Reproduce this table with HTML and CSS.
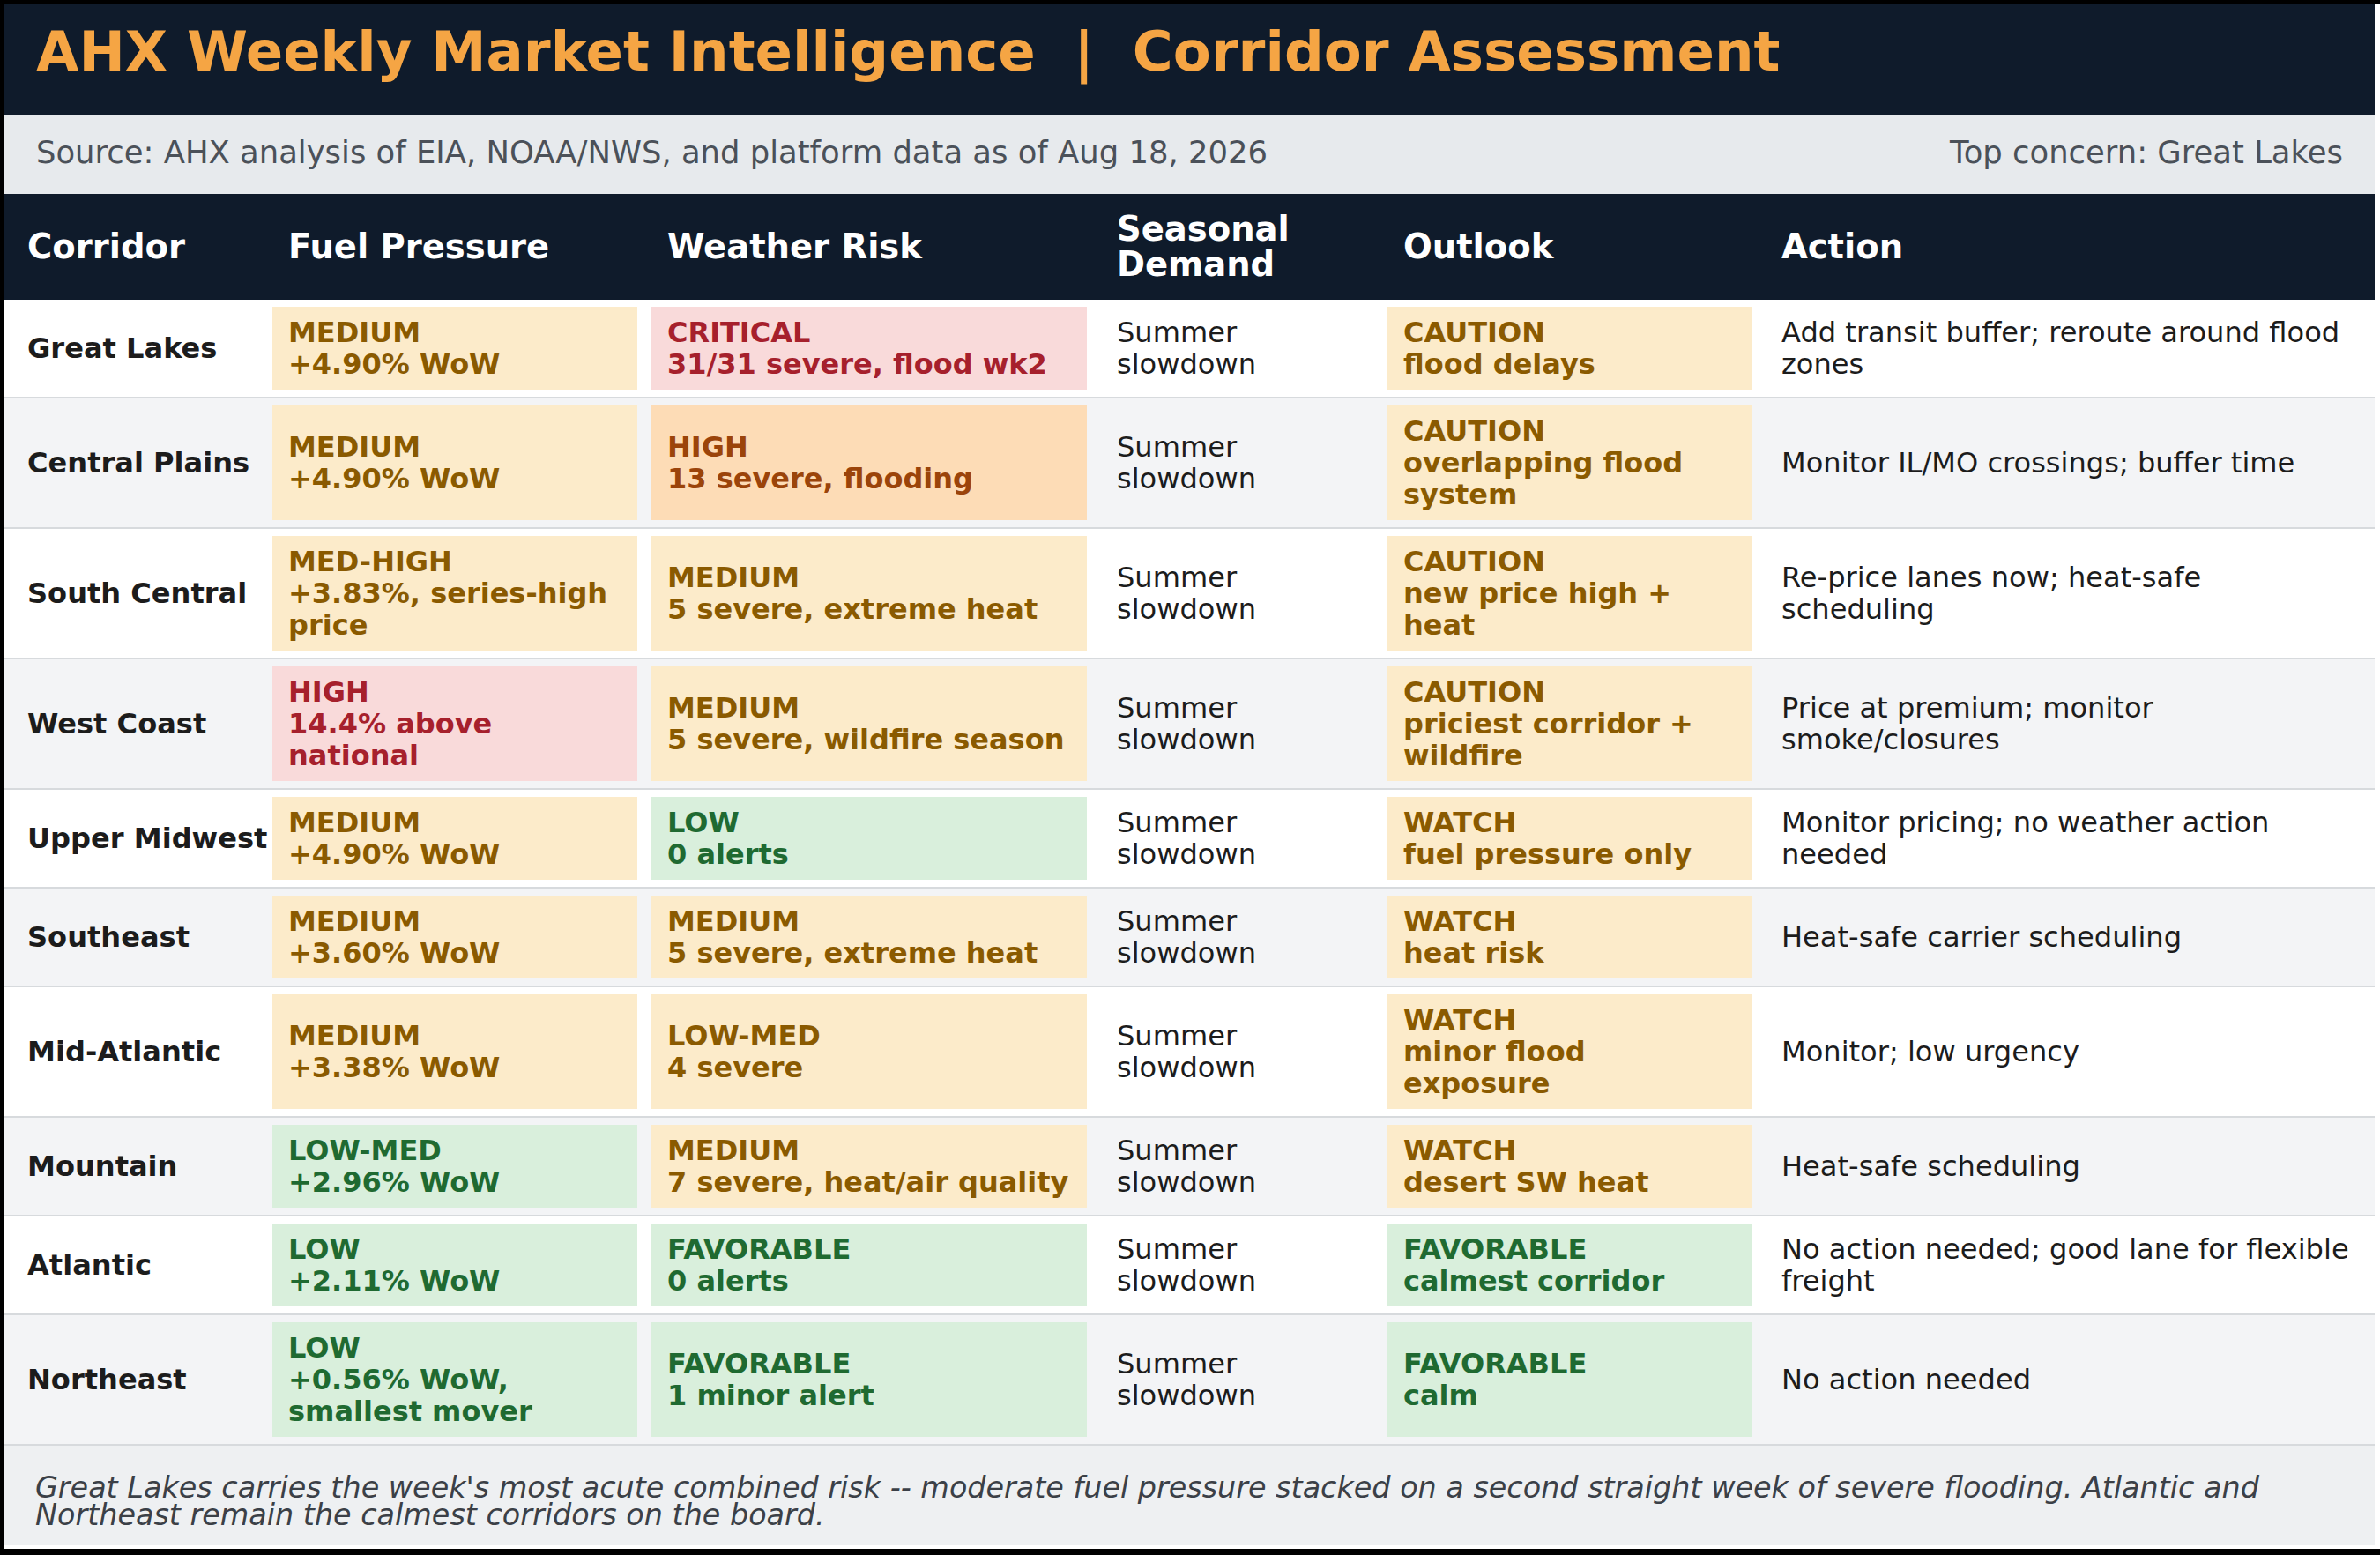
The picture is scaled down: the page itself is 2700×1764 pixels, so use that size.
FILE: index.html
```html
<!DOCTYPE html>
<html lang="en">
<head>
<meta charset="utf-8">
<title>AHX Weekly Market Intelligence | Corridor Assessment</title>
<link rel="stylesheet" href="styles.css">
</head>
<body>
<div class="frame">
  <header class="title-bar">
    <h1 class="title">AHX Weekly Market Intelligence  |  Corridor Assessment</h1>
  </header>
  <div class="meta">
    <span>Source: AHX analysis of EIA, NOAA/NWS, and platform data as of Aug 18, 2026</span>
    <span>Top concern: Great Lakes</span>
  </div>

  <div class="table">
    <div class="row head">
      <div class="cell"><div class="th">Corridor</div></div>
      <div class="cell"><div class="th">Fuel Pressure</div></div>
      <div class="cell"><div class="th">Weather Risk</div></div>
      <div class="cell"><div class="th">Seasonal Demand</div></div>
      <div class="cell"><div class="th">Outlook</div></div>
      <div class="cell"><div class="th">Action</div></div>
    </div>

    <div class="row">
      <div class="cell"><div class="name">Great Lakes</div></div>
      <div class="cell"><div class="badge amber"><span>MEDIUM</span><span>+4.90% WoW</span></div></div>
      <div class="cell"><div class="badge red"><span>CRITICAL</span><span>31/31 severe, flood wk2</span></div></div>
      <div class="cell"><div class="text">Summer slowdown</div></div>
      <div class="cell"><div class="badge amber"><span>CAUTION</span><span>flood delays</span></div></div>
      <div class="cell"><div class="text">Add transit buffer; reroute around flood zones</div></div>
    </div>

    <div class="row alt">
      <div class="cell"><div class="name">Central Plains</div></div>
      <div class="cell"><div class="badge amber"><span>MEDIUM</span><span>+4.90% WoW</span></div></div>
      <div class="cell"><div class="badge orange"><span>HIGH</span><span>13 severe, flooding</span></div></div>
      <div class="cell"><div class="text">Summer slowdown</div></div>
      <div class="cell"><div class="badge amber"><span>CAUTION</span><span>overlapping flood system</span></div></div>
      <div class="cell"><div class="text">Monitor IL/MO crossings; buffer time</div></div>
    </div>

    <div class="row">
      <div class="cell"><div class="name">South Central</div></div>
      <div class="cell"><div class="badge amber"><span>MED-HIGH</span><span>+3.83%, series-high price</span></div></div>
      <div class="cell"><div class="badge amber"><span>MEDIUM</span><span>5 severe, extreme heat</span></div></div>
      <div class="cell"><div class="text">Summer slowdown</div></div>
      <div class="cell"><div class="badge amber"><span>CAUTION</span><span>new price high + heat</span></div></div>
      <div class="cell"><div class="text">Re-price lanes now; heat-safe scheduling</div></div>
    </div>

    <div class="row alt">
      <div class="cell"><div class="name">West Coast</div></div>
      <div class="cell"><div class="badge red"><span>HIGH</span><span>14.4% above national</span></div></div>
      <div class="cell"><div class="badge amber"><span>MEDIUM</span><span>5 severe, wildfire season</span></div></div>
      <div class="cell"><div class="text">Summer slowdown</div></div>
      <div class="cell"><div class="badge amber"><span>CAUTION</span><span>priciest corridor + wildfire</span></div></div>
      <div class="cell"><div class="text">Price at premium; monitor smoke/closures</div></div>
    </div>

    <div class="row">
      <div class="cell"><div class="name">Upper Midwest</div></div>
      <div class="cell"><div class="badge amber"><span>MEDIUM</span><span>+4.90% WoW</span></div></div>
      <div class="cell"><div class="badge green"><span>LOW</span><span>0 alerts</span></div></div>
      <div class="cell"><div class="text">Summer slowdown</div></div>
      <div class="cell"><div class="badge amber"><span>WATCH</span><span>fuel pressure only</span></div></div>
      <div class="cell"><div class="text">Monitor pricing; no weather action needed</div></div>
    </div>

    <div class="row alt">
      <div class="cell"><div class="name">Southeast</div></div>
      <div class="cell"><div class="badge amber"><span>MEDIUM</span><span>+3.60% WoW</span></div></div>
      <div class="cell"><div class="badge amber"><span>MEDIUM</span><span>5 severe, extreme heat</span></div></div>
      <div class="cell"><div class="text">Summer slowdown</div></div>
      <div class="cell"><div class="badge amber"><span>WATCH</span><span>heat risk</span></div></div>
      <div class="cell"><div class="text">Heat-safe carrier scheduling</div></div>
    </div>

    <div class="row">
      <div class="cell"><div class="name">Mid-Atlantic</div></div>
      <div class="cell"><div class="badge amber"><span>MEDIUM</span><span>+3.38% WoW</span></div></div>
      <div class="cell"><div class="badge amber"><span>LOW-MED</span><span>4 severe</span></div></div>
      <div class="cell"><div class="text">Summer slowdown</div></div>
      <div class="cell"><div class="badge amber"><span>WATCH</span><span>minor flood exposure</span></div></div>
      <div class="cell"><div class="text">Monitor; low urgency</div></div>
    </div>

    <div class="row alt">
      <div class="cell"><div class="name">Mountain</div></div>
      <div class="cell"><div class="badge green"><span>LOW-MED</span><span>+2.96% WoW</span></div></div>
      <div class="cell"><div class="badge amber"><span>MEDIUM</span><span>7 severe, heat/air quality</span></div></div>
      <div class="cell"><div class="text">Summer slowdown</div></div>
      <div class="cell"><div class="badge amber"><span>WATCH</span><span>desert SW heat</span></div></div>
      <div class="cell"><div class="text">Heat-safe scheduling</div></div>
    </div>

    <div class="row">
      <div class="cell"><div class="name">Atlantic</div></div>
      <div class="cell"><div class="badge green"><span>LOW</span><span>+2.11% WoW</span></div></div>
      <div class="cell"><div class="badge green"><span>FAVORABLE</span><span>0 alerts</span></div></div>
      <div class="cell"><div class="text">Summer slowdown</div></div>
      <div class="cell"><div class="badge green"><span>FAVORABLE</span><span>calmest corridor</span></div></div>
      <div class="cell"><div class="text">No action needed; good lane for flexible freight</div></div>
    </div>

    <div class="row alt">
      <div class="cell"><div class="name">Northeast</div></div>
      <div class="cell"><div class="badge green"><span>LOW</span><span>+0.56% WoW, smallest mover</span></div></div>
      <div class="cell"><div class="badge green"><span>FAVORABLE</span><span>1 minor alert</span></div></div>
      <div class="cell"><div class="text">Summer slowdown</div></div>
      <div class="cell"><div class="badge green"><span>FAVORABLE</span><span>calm</span></div></div>
      <div class="cell"><div class="text">No action needed</div></div>
    </div>
  </div>

  <footer class="note">Great Lakes carries the week's most acute combined risk -- moderate fuel pressure stacked on a second straight week of severe flooding. Atlantic and Northeast remain the calmest corridors on the board.</footer>
</div>
</body>
</html>
```

FILE: styles.css
```css
html, body {
  margin: 0;
  padding: 0;
}

body {
  background: #000;
  min-height: 1764px;
  font-family: "DejaVu Sans", "Liberation Sans", sans-serif;
}

.frame {
  margin: 5px 0 0 5px;
  padding: 0 6px 4px 0;
  background: #fff;
  width: 2689px;
}

.title-bar {
  background: #0f1b2b;
  padding: 22px 0 40px 36px;
}

.title {
  margin: 0;
  font-size: 62.6px;
  line-height: 63px;
  font-weight: bold;
  color: #f5a544;
  white-space: pre;
}

.meta {
  display: flex;
  justify-content: space-between;
  background: #e7eaed;
  color: #4b5159;
  font-size: 35.4px;
  line-height: 40px;
  padding: 23px 36px 27px 36px;
}

.row {
  display: grid;
  grid-template-columns: 296px 430px 510px 325px 429px 1fr;
  border-bottom: 2px solid #d7dadd;
  background: #fff;
}

.row.alt {
  background: #f3f4f6;
}

.row.head {
  background: #0f1b2b;
  border-bottom: none;
  height: 120px;
  align-items: center;
}

.cell {
  display: flex;
  padding: 8px;
  min-width: 0;
}

.row.head .cell {
  padding: 0 8px;
}

.th {
  padding-left: 18px;
  color: #fff;
  font-weight: bold;
  font-size: 38.5px;
  line-height: 40px;
}

.name,
.text {
  display: flex;
  align-items: center;
  padding: 0 12px 0 18px;
  font-size: 32.1px;
  line-height: 36px;
  color: #1c1c1c;
}

.name {
  font-weight: bold;
  white-space: nowrap;
}

.badge {
  flex: 1;
  display: flex;
  flex-direction: column;
  justify-content: center;
  padding: 11px 12px 11px 18px;
  font-size: 32px;
  line-height: 36px;
  font-weight: bold;
}

.badge.amber {
  background: #fcebca;
  color: #8a5a00;
}

.badge.red {
  background: #f9dada;
  color: #a6202c;
}

.badge.orange {
  background: #fddcb6;
  color: #9b440a;
}

.badge.green {
  background: #d9efdc;
  color: #1f6a31;
}

.note {
  background: #eef0f2;
  color: #3b4047;
  font-style: italic;
  font-size: 33.4px;
  line-height: 31px;
  padding: 32px 36px 19px 35px;
}
```
